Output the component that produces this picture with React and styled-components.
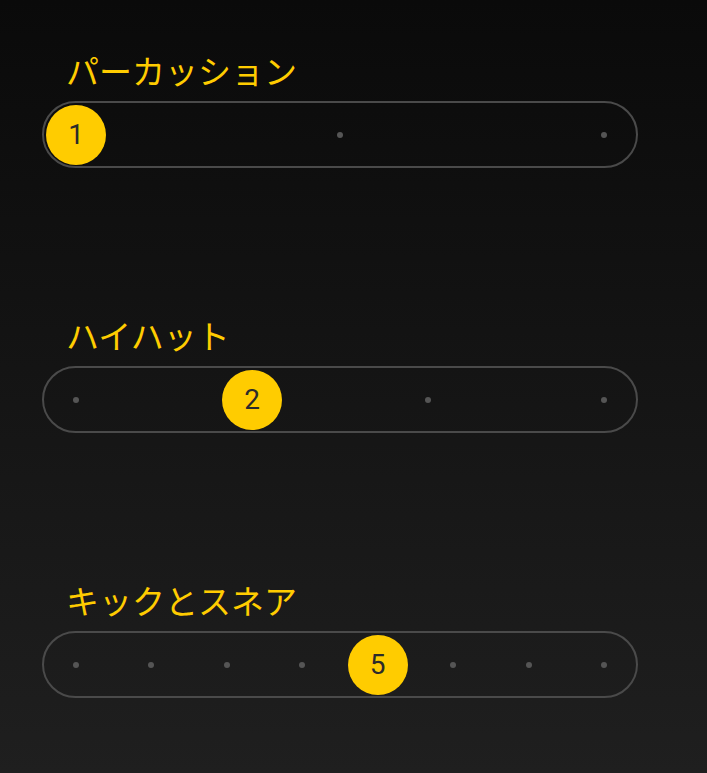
import React from "react";
import styled, { createGlobalStyle } from "styled-components";

const Global = createGlobalStyle`
  html, body { margin: 0; padding: 0; }
  body { background: #0a0a0a; }
`;

const Page = styled.div`
  box-sizing: border-box;
  min-height: 100vh;
  background: linear-gradient(180deg, #0a0a0a 0%, #1f1f1f 100%);
  padding: 50px 69px 0 42px;
  display: flex;
  flex-direction: column;
  gap: 147px;
`;

const Section = styled.div`
  display: flex;
  flex-direction: column;
  gap: 10px;
`;

const Label = styled.div`
  font-family: "Noto Sans CJK JP", "Noto Sans", sans-serif;
  font-size: 33px;
  line-height: 41px;
  color: #ffcc00;
  padding-left: 24px;
`;

const Track = styled.div`
  position: relative;
  box-sizing: border-box;
  height: 67px;
  border: 2px solid #4a4a4a;
  border-radius: 34px;
  display: flex;
  align-items: center;
  justify-content: space-between;
  padding: 0 29px;
`;

const Dot = styled.span`
  width: 6px;
  height: 6px;
  border-radius: 50%;
  background: #555555;
`;

const Thumb = styled.div`
  position: absolute;
  top: 1.5px;
  width: 60px;
  height: 60px;
  border-radius: 50%;
  background: #ffcc00;
  display: flex;
  align-items: center;
  justify-content: center;
  font-family: Roboto, "Liberation Sans", sans-serif;
  font-size: 28px;
  color: #2b2b2b;
`;

const INNER = 528;

function Slider({ label, steps, value }) {
  const step = INNER / (steps - 1);
  const left = 2 + value * step;
  return (
    <Section>
      <Label>{label}</Label>
      <Track>
        {Array.from({ length: steps }).map((_, i) => (
          <Dot key={i} />
        ))}
        <Thumb style={{ left: `${left}px` }}>{value + 1}</Thumb>
      </Track>
    </Section>
  );
}

export default function App() {
  return (
    <>
      <Global />
      <Page>
        <Slider label="パーカッション" steps={3} value={0} />
        <Slider label="ハイハット" steps={4} value={1} />
        <Slider label="キックとスネア" steps={8} value={4} />
      </Page>
    </>
  );
}
